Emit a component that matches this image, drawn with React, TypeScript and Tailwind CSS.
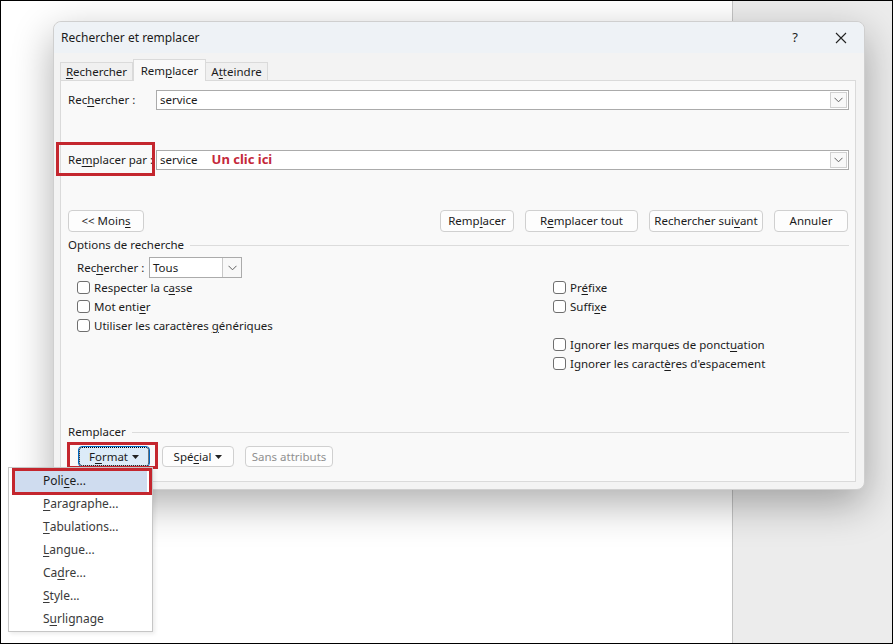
import React from 'react';

const K: React.FC<{ children: React.ReactNode }> = ({ children }) => (
  <span className="underline underline-offset-[2px] decoration-[1px]">{children}</span>
);

const Chevron = () => (
  <svg width="9" height="6" viewBox="0 0 9 6" fill="none">
    <polyline points="0.5,0.8 4.5,4.8 8.5,0.8" stroke="#606060" strokeWidth="1" />
  </svg>
);

const Combo: React.FC<{ children?: React.ReactNode }> = ({ children }) => (
  <div className="flex-1 h-[20px] flex border border-[#ababab] bg-white">
    <div className="flex-1 flex items-center pl-[3px] whitespace-nowrap">{children}</div>
    <div className="w-[17px] my-[1px] mr-[1px] flex items-center justify-center border border-[#d0d0d0] bg-[#f8f8f8]">
      <Chevron />
    </div>
  </div>
);

const Btn: React.FC<{ className?: string; children: React.ReactNode }> = ({ className, children }) => (
  <div className={`h-[22px] flex items-center justify-center whitespace-nowrap rounded-[4px] border border-[#d0d0d0] bg-[#fdfdfd] ${className ?? ''}`}>
    {children}
  </div>
);

const Check: React.FC<{ children?: React.ReactNode }> = ({ children }) => (
  <div className="h-[19px] flex items-center gap-[4px] whitespace-nowrap">
    {children && <span className="w-[13px] h-[13px] rounded-[3px] border border-[#6f6f6f] bg-white" />}
    <span>{children}</span>
  </div>
);

const Caret = () => (
  <svg width="7" height="4" viewBox="0 0 7 4" className="ml-[4px]">
    <polygon points="0,0 7,0 3.5,4" fill="#222" />
  </svg>
);

export default function App() {
  return (
    <div className="w-[893px] h-[644px] relative overflow-hidden border border-black flex font-['Noto_Sans','Open_Sans',sans-serif] text-[11.5px] text-[#1b1b1b]">
      {/* document page + side panel */}
      <div className="w-[731px] h-full bg-white" />
      <div className="flex-1 h-full bg-[#ececec] border-l border-[#c4c4c4]" />

      {/* Dialog */}
      <div className="absolute left-[52px] top-[20px] w-[812px] h-[469px] rounded-[8px] bg-[#f3f3f3] border border-[#cfcfcf] shadow-[0_14px_40px_rgba(0,0,0,0.32)] flex flex-col">
        <div className="h-[31px] flex items-center pl-[7px] bg-[#eef2f6] rounded-t-[8px]">
          <span className="flex-1 text-[12px]">Rechercher et remplacer</span>
          <div className="w-[46px] flex justify-center text-[13px]">?</div>
          <div className="w-[46px] flex justify-center">
            <svg width="12" height="12" viewBox="0 0 12 12">
              <path d="M1 1 L11 11 M11 1 L1 11" stroke="#222" strokeWidth="1.1" />
            </svg>
          </div>
        </div>

        <div className="flex-1 pl-[6px] pr-[8px] pt-[6px]">
          {/* tabs */}
          <div className="h-[21px] flex items-end">
            <div className="w-[73px] h-[18px] flex items-center justify-center border border-b-0 border-[#dadada] bg-[#f0f0f0]">
              <span><K>R</K>echercher</span>
            </div>
            <div className="w-[73px] h-[22px] -mb-[1px] relative z-10 flex items-center justify-center border border-b-0 border-[#dadada] bg-[#f9f9f9]">
              <span>Rem<K>p</K>lacer</span>
            </div>
            <div className="w-[62px] h-[18px] flex items-center justify-center border border-b-0 border-l-0 border-[#dadada] bg-[#f0f0f0]">
              <span>A<K>t</K>teindre</span>
            </div>
          </div>

          {/* panel */}
          <div className="h-[402px] border border-[#dadada] bg-[#f9f9f9] flex flex-col pl-[7px] pr-[6px]">
            <div className="mt-[9px] h-[20px] flex items-center">
              <div className="w-[88px] whitespace-nowrap">Rec<K>h</K>ercher :</div>
              <Combo>service</Combo>
            </div>

            <div className="mt-[40px] h-[20px] flex items-center">
              <div className="w-[88px] relative whitespace-nowrap">
                Re<K>m</K>placer par :
                <span className="absolute -left-[12px] -top-[9px] w-[99px] h-[34px] border-[3px] border-[#c4262e]" />
              </div>
              <Combo>
                service
                <span className="ml-[14px] text-[13px] font-bold text-[#c4283a]">Un clic ici</span>
              </Combo>
            </div>

            <div className="mt-[40px] flex items-center">
              <Btn className="w-[76px]">&lt;&lt; Moin<K>s</K></Btn>
              <div className="ml-auto mr-[1px] flex gap-[11px]">
                <Btn className="w-[74px]">Remp<K>l</K>acer</Btn>
                <Btn className="w-[113px]">R<K>e</K>mplacer tout</Btn>
                <Btn className="w-[114px]">Rechercher sui<K>v</K>ant</Btn>
                <Btn className="w-[74px]">Annuler</Btn>
              </div>
            </div>

            {/* options */}
            <div className="mt-[5px] h-[16px] flex items-center gap-[6px]">
              <span>Options de recherche</span>
              <div className="flex-1 h-px bg-[#dcdcdc]" />
            </div>
            <div className="pl-[9px] mt-[4px]">
              <div className="h-[21px] flex items-center">
                <div className="w-[72px] whitespace-nowrap">Rec<K>h</K>ercher :</div>
                <div className="w-[93px] h-[21px] flex border border-[#ababab] bg-white">
                  <div className="flex-1 flex items-center pl-[3px]">Tous</div>
                  <div className="w-[19px] flex items-center justify-center border-l border-[#c8c8c8] bg-[#f8f8f8]">
                    <Chevron />
                  </div>
                </div>
              </div>
              <div className="flex">
                <div className="w-[476px]">
                  <Check>Respecter la c<K>a</K>sse</Check>
                  <Check>Mot enti<K>e</K>r</Check>
                  <Check>Utiliser les caractères <K>g</K>énériques</Check>
                </div>
                <div>
                  <Check>Pr<K>é</K>fixe</Check>
                  <Check>Suffi<K>x</K>e</Check>
                  <Check />
                  <Check>Ignorer les marques de ponct<K>u</K>ation</Check>
                  <Check>Ignorer les caract<K>è</K>res d'espacement</Check>
                </div>
              </div>
            </div>

            {/* remplacer section */}
            <div className="mt-auto pb-[14px]">
              <div className="h-[16px] flex items-center gap-[6px]">
                <span>Remplacer</span>
                <div className="flex-1 h-px bg-[#dcdcdc]" />
              </div>
              <div className="mt-[6px] flex items-center pl-[10px]">
                <div className="relative">
                  <div className="w-[72px] h-[21px] flex items-center justify-center rounded-[4px] border border-[#0067c0] bg-[#dcebf8] outline outline-1 outline-dotted outline-black -outline-offset-[2px]">
                    F<K>o</K>rmat<Caret />
                  </div>
                  <span className="absolute -left-[11px] -top-[4px] w-[91px] h-[27px] border-[3px] border-[#c4262e]" />
                </div>
                <Btn className="ml-[12px] w-[72px] !h-[21px]">Spé<K>c</K>ial<Caret /></Btn>
                <Btn className="ml-[11px] w-[88px] !h-[21px] text-[#8f8f8f]">Sans attributs</Btn>
              </div>
            </div>
          </div>
        </div>
      </div>

      {/* Format menu */}
      <div className="absolute left-[7px] top-[466px] w-[145px] h-[165px] border border-[#c6c6c6] bg-white py-[1px] shadow-[2px_2px_4px_rgba(0,0,0,0.08)] text-[12px] text-[#3a3a3a]">
        {[
          [<>Poli<K>c</K>e...</>, true],
          [<><K>P</K>aragraphe...</>, false],
          [<><K>T</K>abulations...</>, false],
          [<><K>L</K>angue...</>, false],
          [<>Ca<K>d</K>re...</>, false],
          [<><K>S</K>tyle...</>, false],
          [<>S<K>u</K>rlignage</>, false],
        ].map(([label, active], i) => (
          <div
            key={i}
            className={`h-[23px] mx-[5px] pl-[29px] flex items-center ${active ? 'bg-[#cfdcef] text-[#1b1b1b]' : ''}`}
          >
            {label}
          </div>
        ))}
        <span className="absolute left-[3px] top-[0px] w-[140px] h-[27px] border-[3px] border-[#c4262e]" />
      </div>
    </div>
  );
}
